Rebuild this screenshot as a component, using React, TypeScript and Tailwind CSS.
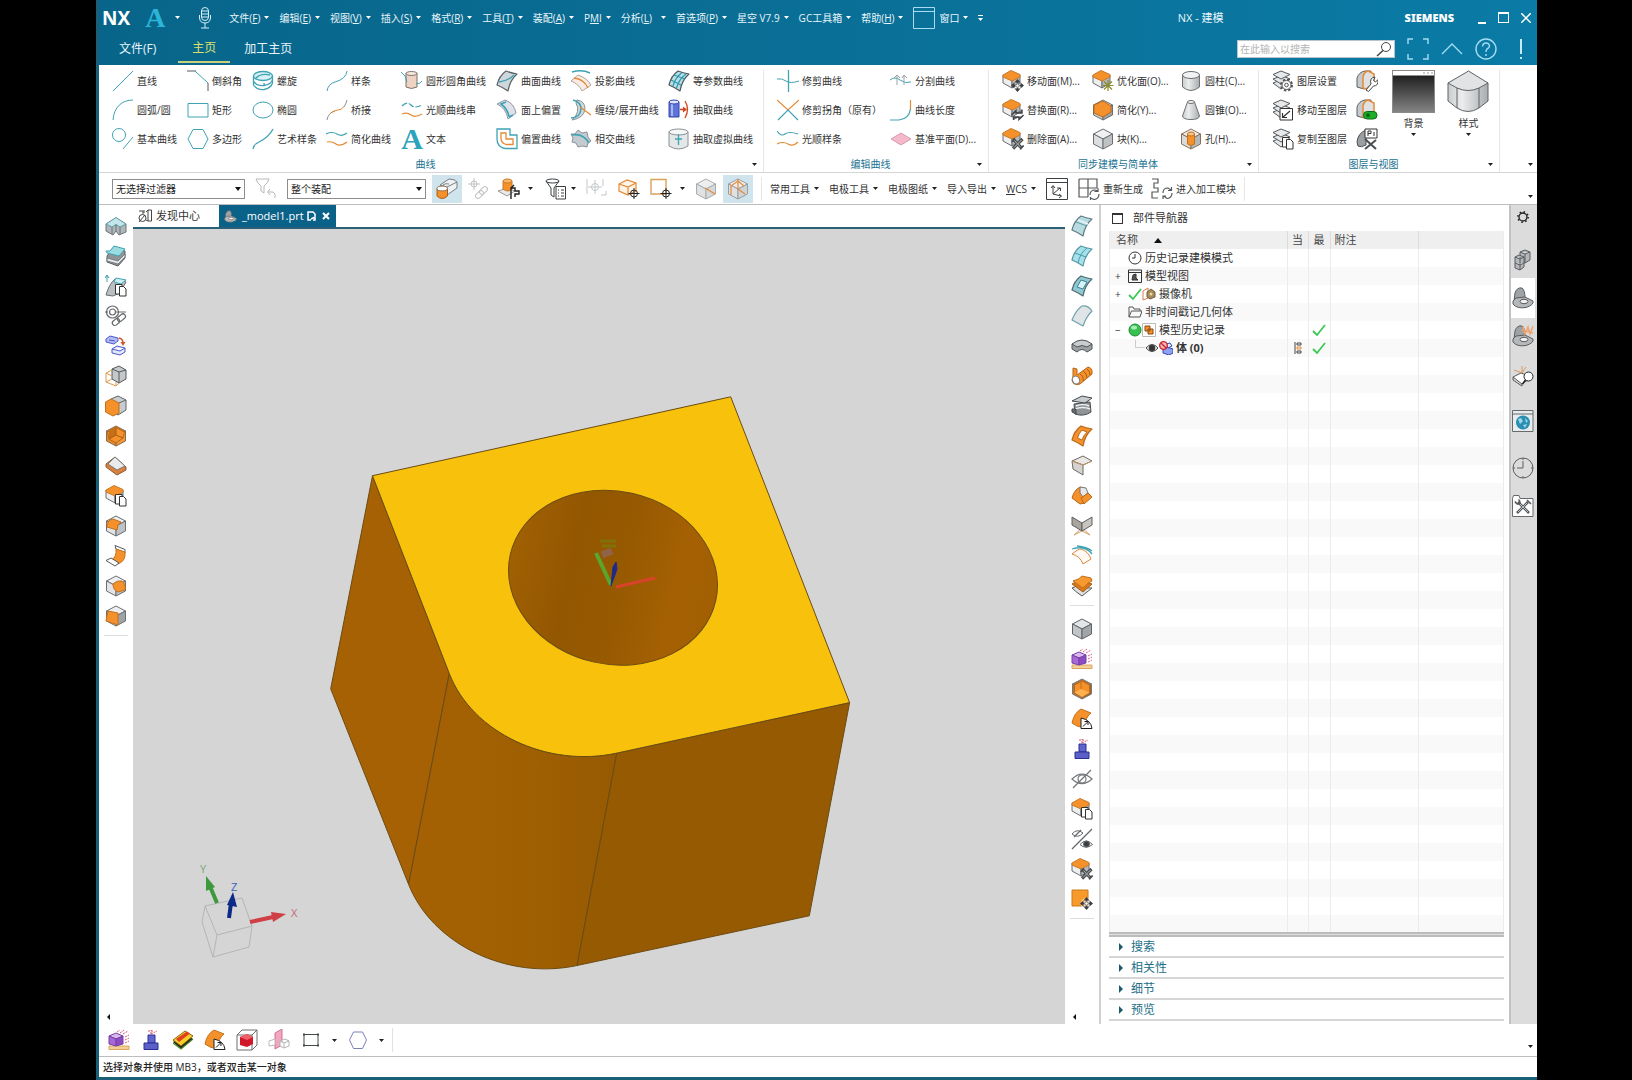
import type { ReactNode } from 'react';

const T = '#3fa3b3';
const O = '#e58a35';
const G = '#555b60';
const F = '#f5912a';

const cube = (top: string, left: string, right: string, stroke = '#6b6f72') => (
  <g stroke={stroke} strokeWidth="1" strokeLinejoin="round">
    <path d="M11 1 20.500 6 11 11 1.500 6Z" fill={top} />
    <path d="M1.500 6 11 11V21L1.500 16Z" fill={left} />
    <path d="M20.500 6 11 11V21L20.500 16Z" fill={right} />
  </g>
);
const smallCube = (
  <g strokeWidth="1" strokeLinejoin="round">
    <path d="M1 5 10 10V18L1 13Z" fill="#eceeef" stroke="#6b6f72" />
    <path d="M18 5 10 10V18L18 13Z" fill="#b4b8bb" stroke="#6b6f72" />
    <path d="M9 .500 18 4.500V7L10 11 1 7V5Z" fill={F} stroke="#c87a28" />
  </g>
);
const moveBadge = (
  <g stroke="#3c4043" strokeWidth="1.500" fill="#3c4043">
    <path d="M15.500 10V21M10 15.500H21" />
    <path d="M15.500 9 12.500 12.500H18.500ZM15.500 22 12.500 18.500H18.500ZM9 15.500 12.500 12.500V18.500ZM22 15.500 18.500 12.500V18.500Z" stroke="none" />
    <path d="M13.500 15.500H17.500M15.500 13.500V17.500" stroke="#fff" strokeWidth=".800" />
  </g>
);
const crossBadge = (
  <g fill="none">
    <path d="M11 11 20 20.500M20.500 11 11 20.500" stroke="#4a4d50" strokeWidth="3.200" />
    <path d="M12 12 19 19.500M19.500 12 12 19.500" stroke="#b9bcbe" strokeWidth="1" />
    <path d="M9.500 13.500Q12.500 13.500 12.500 10M18.500 21.500Q18.500 18 22 18" stroke="#4a4d50" strokeWidth="1.500" />
  </g>
);
const pagesBadge = (
  <g fill="#fff" stroke="#333" strokeWidth="1">
    <path d="M10.500 9.500H17V19H10.500Z" />
    <path d="M14.500 11.500H18.500L21 14V21H14.500Z" />
  </g>
);
const targetBadge = (
  <g fill="none" stroke="#222">
    <circle cx="16" cy="15.500" r="3.500" />
    <path d="M16 10V21M10.500 15.500H21.500" />
  </g>
);
const gearBadge = (
  <g>
    <circle cx="14.500" cy="15" r="5.500" fill="#fff" stroke="#555" strokeWidth="2" strokeDasharray="2.500 1.800" />
    <circle cx="14.500" cy="15" r="4.500" fill="#fff" stroke="#555" />
    <circle cx="14.500" cy="15" r="1.800" fill="none" stroke="#555" />
  </g>
);
const layers = (
  <g fill="#e6e8e9" stroke="#55595c" strokeWidth="1" strokeLinejoin="round">
    <path d="M1 13 10 9.500 18 13 9 19Z" />
    <path d="M1 9 10 5.500 18 9 9 14Z" />
    <path d="M1 4.500 9 1 18 4.500 9 9Z" />
  </g>
);
const sheet = (fill: string, stroke: string) => (
  <path d="M10 1Q15 3 21 4 14 10 12 21 6 17 1 15 3 6 10 1Z" fill={fill} stroke={stroke} strokeWidth="1.200" strokeLinejoin="round" />
);
const part = (
  <g stroke="#5a5d60" strokeWidth="1">
    <path d="M2 14 3 6Q5 0 10 1 13 3 13 11L8 17Z" fill="#9fa3a6" />
    <path d="M1 14 4 11 13 10 21 14Q22 18 14 20.500 5 22 1 17Z" fill="#b5b8ba" />
    <ellipse cx="12" cy="14.500" rx="4" ry="2.200" fill="#f2f2f2" />
  </g>
);
const purpleBlock = (
  <g>
    <path d="M1 17H21V20.500H1Z" fill="#f3cf9a" stroke="#d9a85c" />
    <path d="M1 7 8 4 15 7 8 10Z" fill="#d9b8ee" stroke="#7a3fa8" />
    <path d="M1 7 8 10V17L1 15Z" fill="#a569d6" stroke="#7a3fa8" />
    <path d="M15 7 8 10V17L15 15Z" fill="#8a4cc0" stroke="#7a3fa8" />
    <path d="M9 3 12 1M12 4 16 1M15 5 20 2M17 8 21 6M17 11 21 9M17 14 21 12" stroke="#d85a7a" strokeWidth="1" strokeDasharray="2 1" />
  </g>
);
const pedestal = (
  <g stroke="#2d2f8e">
    <path d="M8 6H15V14H8Z" fill="#6064d0" />
    <path d="M4 14H18V20.500H4Z" fill="#5b5fc8" />
    <path d="M11 5V1M8 2H14M11 5 17 2" stroke="#d8506a" strokeDasharray="2 1" />
  </g>
);
const orangeFan = (
  <g>
    <path d="M1 15Q3 5 10 1L20 5Q15 8 13 20L6 18Z" fill={F} stroke="#c2701c" />
    <path d="M10 10V20.500H21Q20 12 10 10Z" fill="#fff" stroke="#222" />
    <path d="M12 18.500 17 13.500M13.500 13.500H17V17" fill="none" stroke="#222" />
  </g>
);

const icons: Record<string, ReactNode> = {
  line: <path d="M1 21 21 1" stroke={T} />,
  chamfer: (
    <g fill="none">
      <path d="M0 1H9M21 13V21" stroke={G} />
      <path d="M8 1 21 13" stroke={T} />
    </g>
  ),
  helix: (
    <g fill="none" stroke={T} strokeWidth="1.300">
      <ellipse cx="11" cy="6" rx="9.500" ry="4.500" fill="#d6f0f4" />
      <path d="M1.500 6V11Q4 16 12 15.500 20 14 20.500 9V6M1.500 11V15Q5 20 12 19.500 19 18 20.500 13V9M4 8Q9 3 18 5M12 15.500V13" />
    </g>
  ),
  spline: <path d="M1 21Q2 14 9 12 20 9 21 1" stroke={T} fill="none" />,
  fillet: (
    <g>
      <path d="M5 3V17Q10.500 20 16 17V3Z" fill="#eed3c4" stroke="#7c7068" />
      <ellipse cx="10.500" cy="3.500" rx="5.500" ry="2" fill="#f6e7de" stroke="#7c7068" />
      <path d="M0 2Q5 5 6 12M15 14Q19 14 21 11" fill="none" stroke={T} />
    </g>
  ),
  surfcurve: (
    <g>
      {sheet('#cdd7dc', '#5a5f64')}
      <path d="M3 12Q12 11 18 5" fill="none" stroke={T} strokeWidth="1.400" />
    </g>
  ),
  arc: <path d="M1 21C2 8 10 1 21 1" stroke={T} fill="none" />,
  rect: <path d="M1 4.500H21V18H1Z" stroke={T} fill="none" />,
  ellipse: <ellipse cx="11" cy="11" rx="10" ry="8" stroke={T} fill="none" />,
  bridge: (
    <g fill="none">
      <path d="M1 21Q2 14 9 12" stroke="#8a8f92" />
      <path d="M4 14.500Q7 12 10 11.500 16 11 18 7.500" stroke={O} />
      <path d="M18 8Q20 5 21 1" stroke="#8a8f92" />
    </g>
  ),
  smoothstring: (
    <g fill="none" strokeWidth="1.200">
      <path d="M1 7Q6 2 10 6T21 6" stroke={T} strokeDasharray="6 1.500" />
      <path d="M1 15Q6 13 10 16T21 15" stroke={O} />
    </g>
  ),
  faceoffset: (
    <g>
      <path d="M1 5 9 1Q18 4 20 14L12 20Q10 9 1 5Z" fill="#dde1ea" stroke="#8d94a0" />
      <path d="M13 18Q12 10 5 5L10 3M13 18 17 16" fill="none" stroke={T} strokeWidth="1.600" />
    </g>
  ),
  basic: (
    <g fill="none" stroke={T}>
      <circle cx="7" cy="7" r="6.500" />
      <path d="M11 21 21 9" />
    </g>
  ),
  hex: <path d="M6 1.500H16L21 11 16 20.500H6L1 11Z" stroke={T} fill="none" />,
  artspline: <path d="M1 21Q2 16 7 14 17 9 21 1" stroke={T} fill="none" strokeWidth="1.300" />,
  simplify: (
    <g fill="none" strokeWidth="1.200">
      <path d="M0 6Q6 3 11 6T21 5" stroke={T} />
      <path d="M1 14Q6 13 10 16T21 14" stroke={O} />
    </g>
  ),
  offset: (
    <g fill="none">
      <path d="M1 1H14V7H21V20.500H9Q1 19 1 11Z" stroke={T} strokeWidth="1.300" />
      <path d="M5 5H10V11H17V16.500H10Q5 15 5 10Z" stroke={O} strokeWidth="1.300" />
    </g>
  ),
  project: (
    <g>
      <path d="M1 11 8 5Q17 8 21 15L12 21Q9 14 1 11Z" fill="#f8ece4" stroke="#b3a49b" />
      <path d="M4 8Q14 9 18 18" fill="none" stroke={O} strokeWidth="1.300" />
      <path d="M2 2Q12 -1 20 3" fill="none" stroke={T} strokeWidth="1.400" />
    </g>
  ),
  wrap: (
    <g>
      <path d="M7 1Q15 2 15 10 14 19 2 21 11 13 6 4Z" fill="#d3dadd" stroke="#8a9094" />
      <path d="M3 1Q11 3 11 10 10 19 1 19" fill="none" stroke={T} strokeWidth="1.600" />
      <path d="M10 8 21 16" stroke={O} strokeWidth="1.300" />
    </g>
  ),
  intersect: (
    <g>
      <path d="M1 6 5 6 8 2 12 5 17 4 18 9 21 13 18 15 17 19 12 18 8 19 6 15 2 14 3 10Z" fill="#c3cbd0" stroke="#8b9398" />
      <path d="M2 7Q13 5 19 15" fill="none" stroke={T} strokeWidth="1.600" />
    </g>
  ),
  iso: (
    <g>
      {sheet('#b9dfe6', '#50565a')}
      <path d="M3 10 13 15M6 5 17 9M5 16Q7 8 14 2.500M8.500 18Q11 9 18 4" fill="none" stroke="#2d98ab" strokeWidth="1.200" />
    </g>
  ),
  extract: (
    <g>
      <path d="M1 3V18H11V3Z" fill="#5c73d8" stroke="#3547b0" />
      <path d="M3 4H5V17H3Z" fill="#a9b5f2" />
      <ellipse cx="6" cy="3" rx="5" ry="2" fill="#dfe4fb" stroke="#3547b0" />
      <path d="M17 2Q22 10 17 19M12 10.500H16" fill="none" stroke="#d0451b" strokeWidth="1.300" />
      <path d="M15 7.500 19 10.500 15 13.500Z" fill="#d0451b" />
    </g>
  ),
  virtual: (
    <g stroke="#8b9194">
      <path d="M1 4V18Q10.500 24 20 18V4Z" fill="#e4e7e8" />
      <ellipse cx="10.500" cy="4" rx="9.500" ry="3" fill="#f5f6f6" />
      <path d="M10.500 6V17M7 11H14" stroke={T} strokeWidth="1.300" />
    </g>
  ),
  trim: (
    <g fill="none" stroke={T}>
      <path d="M11.500 0V22" strokeWidth="1.300" />
      <path d="M0 9Q5 8 9 11T22 11" />
    </g>
  ),
  corner: (
    <g strokeWidth="1.200">
      <path d="M0 1 11 11 22 1" stroke={O} fill="none" />
      <path d="M1 21 11 11 21 21" stroke={T} fill="none" />
    </g>
  ),
  smoothspline: (
    <g fill="none" strokeWidth="1.200">
      <path d="M0 3Q4 9 8 6T21 6" stroke={T} />
      <path d="M0 16Q6 13 11 16T21 14" stroke={O} />
    </g>
  ),
  divide: (
    <g fill="none">
      <path d="M0 10Q5 6 10 10T21 12" stroke={T} />
      <path d="M7 6V15M14 6V15M4 8 7 5 10 8M12 8 14 5 17 8" stroke="#9aa3a8" />
    </g>
  ),
  length: (
    <g fill="none" strokeWidth="1.200">
      <path d="M20.500 1V11" stroke={O} />
      <path d="M20.500 10Q19 20 9 21H0" stroke={T} />
    </g>
  ),
  datum: <path d="M1 11 11 5 21 11 11 17Z" fill="#f5b9cc" stroke="#d99aae" />,

  moveface: <g>{smallCube}{moveBadge}</g>,
  replaceface: (
    <g>
      {smallCube}
      <path d="M9.500 16 14 11.500V14H20V10.500M21.500 16 17 20.500V18H11.500V21" fill="#777" stroke="#3c4043" strokeWidth="1.400" />
    </g>
  ),
  deleteface: <g>{smallCube}{crossBadge}</g>,
  optimize: (
    <g>
      {smallCube}
      <path d="M16 10V21M10.500 15.500H21.500M12 11.500 20 19.500M20 11.500 12 19.500" stroke="#8a8b2c" strokeWidth="1.200" />
    </g>
  ),
  simple: (
    <g>
      {cube('#dcdfe1', '#c9cccf', '#9ea2a5')}
      <path d="M2 6 11 2 19 7V13L11 18 2 14Z" fill={F} stroke="#b9681a" />
    </g>
  ),
  block: cube('#f0f1f2', '#dcdee0', '#bfc2c4'),
  cylinder: (
    <g stroke="#6c7073">
      <path d="M2.500 5V17Q11 24 19.500 17V5Z" fill="url(#metal)" />
      <ellipse cx="11" cy="5" rx="8.500" ry="3.500" fill="#f1f2f2" />
    </g>
  ),
  cone: (
    <g stroke="#6c7073">
      <path d="M7.500 3 2.500 17Q3 20.500 11 20.500T19.500 17L14.500 3Z" fill="url(#metal)" />
      <ellipse cx="11" cy="3" rx="3.500" ry="1.500" fill="#f1f2f2" />
    </g>
  ),
  hole: (
    <g>
      {cube('#e9ebec', '#d8dadc', '#b4b7b9', '#8a7256')}
      <path d="M7.500 6V16Q11 19 14.500 16V6Z" fill={F} stroke="#c2701c" />
      <ellipse cx="11" cy="6" rx="3.500" ry="2" fill="#fbc48a" stroke="#c2701c" />
    </g>
  ),
  layerset: <g>{layers}{gearBadge}</g>,
  layermove: (
    <g>
      {layers}
      <path d="M8 9.500H20.500V21H8Z" fill="#fff" stroke="#333" />
      <path d="M10.500 18.500 18 12M10.500 14V18.500H15" fill="none" stroke="#333" strokeWidth="1.200" />
    </g>
  ),
  layercopy: <g>{layers}{pagesBadge}</g>,
  viewwrench: (
    <g>
      <path d="M1 17V8Q3 2 9 1H15V15L8 19Z" fill="#c7cacc" stroke="#5b5e61" />
      <path d="M7 18V7Q8 2 12 1L18 4V13L10 19Z" fill="#dfe1e2" stroke={O} strokeWidth="1.500" />
      <path d="M10 20 15 14Q13 8 19 7L17.500 10.500 19.500 12 22 9.500Q22.500 16 17.500 16L12.500 21.500Z" fill="#fff" stroke="#444" />
    </g>
  ),
  viewtoggle: (
    <g>
      <path d="M1 17V8Q3 2 9 1H15V15L8 19Z" fill="#c7cacc" stroke="#5b5e61" />
      <path d="M7 18V7Q8 2 12 1L18 4V13L10 19Z" fill="#dfe1e2" stroke={O} strokeWidth="1.500" />
      <rect x="7.500" y="12.500" width="13.500" height="7.500" rx="3.700" fill="#1fae2c" stroke="#0c6a16" />
      <circle cx="12" cy="16.200" r="2" fill="#0c6a16" />
    </g>
  ),
  viewpmi: (
    <g>
      <path d="M1 14Q2 5 10 2V17Q5 20 2 18Z" fill="#9b9fa2" stroke="#4b4e51" />
      <path d="M9 1H21V10H9Z" fill="#fff" stroke="#333" />
      <path d="M12 8V3H15V5.500H12M18 4V8" fill="none" stroke="#333" />
      <path d="M9 11 20 21M20 12 9 21" stroke="#4a4d50" strokeWidth="2" />
    </g>
  ),

  filterclear: (
    <g fill="none" stroke="#b4b8bb">
      <path d="M1 1H14Q13 5 9 8V15L6 13V8Q2 5 1 1Z" />
      <path d="M13 14H18Q21 15 20 20M15 11 12.500 14 15 17" />
    </g>
  ),
  cylpair: (
    <g>
      <path d="M4 7 13 1Q19 1 21 4V10L11 17V9Z" fill="#eef2f4" stroke="#7a7e81" />
      <path d="M11 9 21 4M7 7Q9 5 13 6" stroke="#7a7e81" fill="none" />
      <path d="M1 10.500V18Q6 23 11.500 18V10.500Z" fill={F} stroke="#a65f14" />
      <ellipse cx="6.200" cy="10.500" rx="5.200" ry="2.400" fill="#fff" stroke="#8a7256" />
    </g>
  ),
  snaplink: (
    <g fill="none" stroke="#bfc3c5">
      <circle cx="6" cy="6" r="3" />
      <path d="M6 0V12M0 6H12" />
      <rect x="7" y="14" width="9" height="5" rx="2.500" transform="rotate(-45 11.500 16.500)" />
      <rect x="11" y="10" width="9" height="5" rx="2.500" transform="rotate(-45 15.500 12.500)" />
    </g>
  ),
  cylhand: (
    <g>
      <path d="M0 13 9 10 17 13 9 18Z" fill="#e8e8e8" stroke="#999" />
      <path d="M5 3V11Q10 15 14 11V3Z" fill={F} stroke="#c87a28" />
      <ellipse cx="9.500" cy="3" rx="4.500" ry="2" fill="#ffb566" stroke="#c87a28" />
      <path d="M13 21V10H17V13H21V16H17V19M13 10 16 7" fill="none" stroke="#222" strokeWidth="1.400" />
    </g>
  ),
  filterlist: (
    <g fill="none" stroke="#3b3f42">
      <ellipse cx="7.500" cy="3" rx="6.500" ry="2" />
      <path d="M1 3 6 10V17L9 19V10L14 3" />
      <path d="M11 8.500H20.500V21H11Z" fill="#fff" />
      <path d="M13 12H14M16 12H19M13 15H14M16 15H19M13 18H14M16 18H19" />
    </g>
  ),
  snapgray: (
    <g fill="none" stroke="#c3c7c9">
      <circle cx="9" cy="9" r="3.500" />
      <path d="M9 2V16M2 9H16M1 1V16M17 1V8M15 17H20V13" />
    </g>
  ),
  cubetarget: (
    <g>
      <path d="M1 6 9 2 18 5V13L10 17 1 13Z" fill="#fdf3e6" stroke={O} strokeWidth="1.200" />
      <path d="M1 6 10 9 18 5M10 9V17" fill="none" stroke={O} strokeWidth="1.200" />
      {targetBadge}
    </g>
  ),
  recttarget: (
    <g>
      <path d="M1 1.500H16V16H1Z" fill="none" stroke="#dba05a" strokeWidth="1.400" />
      {targetBadge}
    </g>
  ),
  cubeline: (
    <g>
      {cube('#eceeef', '#dfe1e2', '#d6d8da', '#a9acae')}
      <path d="M10 10 20 16" stroke={O} strokeWidth="1.200" />
    </g>
  ),
  cubeedge: (
    <g>
      {cube('#eceeef', '#dfe1e2', '#d0d3d5', '#999da0')}
      <path d="M4 17V8L11 3 17 8M11 1V11L18 16" fill="none" stroke={O} strokeWidth="1.200" />
    </g>
  ),
  wcs: (
    <g fill="none" stroke="#3b3f42">
      <path d="M.500.500H21.500V21.500H.500ZM.500 4.500H21.500" />
      <path d="M7 8V16L15 18M7 16 14 10M5 10 7 7.500 9 10M13 16 15.500 18 13 20M11 10H14.500V13" />
    </g>
  ),
  regen: (
    <g fill="none" stroke="#55595c" strokeWidth="1.200">
      <path d="M1 1H19V10M1 1V19H10M10 1V19M1 10H19" />
      <path d="M12 17Q12 12 17 12L20 13M21 16Q21 21 16 21.500L12.500 20M20 10V13.500H16.500M12.500 22V19" />
    </g>
  ),
  machining: (
    <g fill="none" stroke="#55595c" strokeWidth="1.200">
      <path d="M1 1H7V5H3V10H7V14H1V20H7" />
      <path d="M12 15Q12 10 17 10L20 12M21 15Q21 20 16 20.500L12.500 18M20.500 9V12.500H17M12 21V18H15" />
    </g>
  ),

  lbracket: (
    <g stroke="#6b7478">
      <path d="M1 9 11 3 21 9V17L14 20 11 16 8 20 1 16Z" fill="#aeb6b9" />
      <path d="M1 9 11 2.500 21 9 15 12 11 9.500 7 12Z" fill="#c3e6ea" stroke="#5f9ca6" />
      <path d="M7 12V19M15 12V19M11 9.500V16" fill="none" />
    </g>
  ),
  section: (
    <g>
      <path d="M2 11 8 3 20 6V13L13 21 2 17Z" fill="#8f9497" stroke="#5a5e61" />
      <path d="M2 13 13 16 20 9V12L13 19 2 16Z" fill="#e4e7e8" stroke="#6a6e71" strokeWidth=".800" />
      <path d="M1 6H5L9 1 20 4 14 11 2 8Z" fill="#9bdce3" stroke={T} />
    </g>
  ),
  sketchpages: (
    <g>
      <path d="M1 20Q4 9 10 4L21 7 15 18 8 21Z" fill="#b9bec0" stroke="#6c7073" />
      <path d="M11 3 21 5 16 9 9 7ZM2 1V7M0 3 2 0 4 3" fill="#cfeef2" stroke={T} />
      {pagesBadge}
    </g>
  ),
  linkpart: (
    <g fill="none" stroke="#65696c" strokeWidth="1.200">
      <circle cx="7.500" cy="7" r="6" />
      <circle cx="7.500" cy="7" r="3" />
      <path d="M0 7H3M11 7H21" />
      <rect x="7" y="14.500" width="8" height="5" rx="2.500" fill="#fff" transform="rotate(-40 11 17)" />
      <rect x="12" y="10.500" width="9" height="5" rx="2.500" transform="rotate(-40 16 13)" />
    </g>
  ),
  bluemove: (
    <g stroke="#4a57c8">
      <path d="M1 4 5 1 13 3V6L9 9 1 7ZM4 5 10 6" fill="#b3bcf5" />
      <path d="M7 14 12 11 20 13V17L15 20 7 18ZM7 14 15 16 20 13" fill="#e5e8fd" />
      <path d="M14 3Q18 4 18 8" fill="none" stroke="#d0552a" strokeWidth="1.500" />
      <path d="M15.500 7H20.500L18 11Z" fill="#d0552a" stroke="none" />
    </g>
  ),
  wirecube: (
    <g>
      <path d="M7 4 14 1 21 5V14L14 18 7 14Z" fill="#c5c8ca" stroke="#55595c" />
      <path d="M7 4 14 7 21 5M14 7V18" fill="none" stroke="#55595c" />
      <path d="M1 8 7 5M1 8V17L11 21 14 18M1 8 7 11M1 17 7 14M11 21V17" fill="none" stroke="#d99a4e" />
    </g>
  ),
  extrude: (
    <g>
      <path d="M6 4 13 1 21 5V15L13 20 6 15Z" fill="#c9cccf" stroke="#5f6366" />
      <path d="M0.500 7 6 4 14 8V18L8 21 .500 17Z" fill={F} stroke="#c2701c" />
      <path d="M14 8 21 5" fill="none" stroke="#5f6366" />
    </g>
  ),
  shell: (
    <g>
      {cube('#d57f22', '#e08a2c', '#f0973a', '#8b6d4c')}
      <path d="M2.500 7 11 2.500 19.500 7 18 13 11 18 4 14Z" fill={F} stroke="#b9681a" />
      <path d="M4 6.500 11 3V10L4 14Z" fill="#c56f16" />
      <path d="M11 10 18 13M11 3V10L4 14" fill="none" stroke="#a85c10" />
    </g>
  ),
  tilt: (
    <g strokeLinejoin="round">
      <path d="M1 9 10 2 21 12V15L12 20 1 12Z" fill="#d9803c" stroke="#8b5a36" />
      <path d="M3 9 10 2 20 11 12 15Z" fill="#e9ebed" stroke="#777b7e" />
    </g>
  ),
  cubepages: <g>{smallCube}{pagesBadge}</g>,
  draft: (
    <g>
      {cube('#eceeef', '#e2e4e6', '#bfc2c5')}
      <path d="M2 9Q4 4 8 4L16 7Q12 9 12 15L2 12Z" fill={F} stroke="#c2701c" />
    </g>
  ),
  bend: (
    <g>
      <path d="M10 .500 20 4.500 20 8 11 4Z" fill="#fff" stroke="#55595c" />
      <path d="M11 4 20 7Q21 16 13 19L6 15Q12 12 11 4Z" fill={F} stroke="#c2701c" />
      <path d="M1 15.500 6 13 14 18 10 21Z" fill="#fff" stroke="#55595c" />
    </g>
  ),
  round: (
    <g>
      {cube('#eceeef', '#e2e4e6', '#bfc2c5')}
      <path d="M8 9Q12 5 17 6 21 9 20 15L13 17Q8 15 8 9Z" fill={F} stroke="#c2701c" />
    </g>
  ),
  faceblend: (
    <g>
      {cube('#eceeef', '#d7dadc', '#9fa3a6')}
      <path d="M3 6 13 8V20L1 16Z" fill={F} stroke="#c2701c" />
    </g>
  ),

  sheet1: (
    <g>
      {sheet('#b6dce2', '#5f7a80')}
      <path d="M5 7 16 11" fill="none" stroke="#5f9ca6" />
      <path d="M7 5 17 9" fill="none" stroke="#e8f5f7" strokeWidth="1.500" />
    </g>
  ),
  sheet2: (
    <g>
      {sheet('#a8e0ea', '#5496a2')}
      <path d="M4 8 15 12M7 18Q9 8 16 3" fill="none" stroke="#3f9db0" />
    </g>
  ),
  sheet3: (
    <g>
      {sheet('#8fc9d3', '#50696f')}
      <path d="M6 12 10 5 16 7 12 14Z" fill="#d7f3f7" stroke="#3b8391" />
    </g>
  ),
  sheet4: <path d="M1 15Q5 5 11 1 17 0 21 6 15 12 12 21Z" fill="#e1e4e6" stroke="#6fa2aa" strokeWidth="1.200" strokeLinejoin="round" />,
  saddle: (
    <g stroke="#4f5356" strokeLinejoin="round">
      <path d="M1 9V14L6 17Q11 12 16 17L21 14V9Z" fill="#9da1a4" />
      <path d="M1 9Q11 1 21 9L16 12Q11 9 6 12Z" fill="#c9cccd" />
    </g>
  ),
  tube: (
    <g stroke="#b5651a">
      <path d="M2 3 6 4V10L17 2Q22 3 21 9L9 19Q2 21 1 15L2 11Z" fill={F} />
      <ellipse cx="5" cy="15" rx="3.500" ry="4" fill="#fff" stroke="#777" transform="rotate(-25 5 15)" />
      <path d="M9 9Q13 11 12 16M12 6Q16 8 16 13M16 4Q19 6 19 10" fill="none" stroke="#a65f14" />
    </g>
  ),
  ribbonbody: (
    <g stroke="#45494c" strokeLinejoin="round">
      <path d="M3 9 19 7 20 17Q13 22 4 19Z" fill="#8f9396" />
      <path d="M5 11Q12 8 18 11M4 14Q12 11 19 14" fill="none" stroke="#eceeef" strokeWidth="1.600" />
      <path d="M1 6 11 1 21 3 14 8Z" fill="#c9cccf" />
      <path d="M1 14H5V19L1 17Z" fill="#6a6e71" />
    </g>
  ),
  orangeframe: (
    <g>
      {sheet(F, '#b9681a')}
      <path d="M6.500 13Q8 8 11 5L16 7Q12 11 11 15Z" fill="#fff" stroke="#b9681a" />
    </g>
  ),
  cornersheet: (
    <g stroke="#6f6a62" strokeLinejoin="round">
      <path d="M1 6 12 1 21 6 12 10Z" fill="#e9e8e5" />
      <path d="M1 6 12 10V20L2 14Z" fill="#d5d3d0" />
      <path d="M1 6 12 10 21 6" fill="none" stroke="#c79a6a" />
    </g>
  ),
  boxsheet: (
    <g strokeLinejoin="round">
      <path d="M1 13Q3 5 9 2L15 5Q10 9 13 18L9 19Z" fill={F} stroke="#b9681a" />
      <path d="M9 2 15 3 17 8 12 12 9 8Z" fill="#e5e9ec" stroke="#777" />
      <path d="M10 13 17 8 21 12 13 19Z" fill={F} stroke="#b9681a" />
    </g>
  ),
  vshape: (
    <g stroke="#5b5e61" strokeLinejoin="round">
      <path d="M3 20 11 13 19 20 11 16Z" fill="none" stroke="#d9a066" />
      <path d="M1 2 11 8V16L1 10Z" fill="#a9a49d" />
      <path d="M21 2 11 8V16L21 10Z" fill="#c9c4bd" />
    </g>
  ),
  orangecurve: (
    <g fill="none">
      <path d="M1 9Q7 4 10 4 17 6 20 14L12 19Q9 11 1 9Z" fill="#fffaf4" stroke="#d9863a" />
      <path d="M1 4Q14 0 21 9M6 1Q16 2 21 6" stroke={T} strokeWidth="1.300" />
    </g>
  ),
  stack: (
    <g strokeLinejoin="round">
      <path d="M1 13 8 10Q14 14 21 13L11 21Q5 17 1 13Z" fill="#dfe1e2" stroke="#55595c" />
      <path d="M1 9 8 5 21 9 12 17Z" fill="#d87a1c" stroke="#a65f14" />
      <path d="M2 6Q9 4 11 1L20 3 21 6Q16 8 12 13Z" fill="#f7992f" stroke="#c2701c" />
    </g>
  ),
  graycube: cube('#e3e5e6', '#c2c5c7', '#a1a5a8', '#5f6366'),
  purple: purpleBlock,
  hexshell: (
    <g>
      {cube('#b77436', '#b77436', '#a9662a', '#777')}
      <path d="M3.500 7 11 3 18.500 7V14.500L11 19 3.500 14.500Z" fill={F} stroke="#b9681a" />
      <path d="M3.500 14.500 10 11 18.500 14.500L11 19Z" fill="#ffb04f" />
      <path d="M10 4V11" fill="none" stroke="#c46f18" />
    </g>
  ),
  fan: orangeFan,
  pedestal,
  eyeoff: (
    <g fill="none" stroke="#74787b" strokeWidth="1.200">
      <path d="M1 11Q11 1 21 11 11 20 1 11Z" />
      <circle cx="11" cy="11" r="4" />
      <path d="M2 20 20 2" />
    </g>
  ),
  eyeswap: (
    <g fill="none" stroke="#65696c">
      <path d="M1 6Q6 0 12 5 7 11 1 6ZM9 16.500Q15 9.500 21.500 16.500 15 22 9 16.500Z" />
      <path d="M1 21 21 1M3 9 10 2" strokeWidth="1.300" />
      <circle cx="15.500" cy="16" r="3" fill="#3b3f42" />
    </g>
  ),
  orangemove: (
    <g>
      <path d="M1 2H17V18H1Z" fill="#f79a2b" stroke="#c77a20" />
      <circle cx="15.500" cy="15.500" r="5.500" fill="#fff" fillOpacity=".6" />
      {moveBadge}
    </g>
  ),

  stripes: (
    <g>
      <path d="M1 13 13 5 21 10 9 20Z" fill="#222" />
      <path d="M1 11 13 2 21 7 9 17Z" fill="#f6cf28" stroke="#8a6a10" />
      <path d="M4 10 15 2.500 18 4.500 7 13Z" fill="#e2401c" />
      <path d="M1 14 9 20 21 10" fill="none" stroke="#4d8a2a" strokeWidth="1.200" />
    </g>
  ),
  redcube: (
    <g>
      <path d="M1 6 6 1H21V16L16 21H1ZM1 6H16V21M16 6 21 1" fill="#fff" stroke="#6a6e71" />
      <path d="M4 8 11 5 17 8V15L11 18 4 16Z" fill="#d01828" />
      <path d="M4 8 11 5 17 8 11 11Z" fill="#f0606a" />
    </g>
  ),
  pinkplane: (
    <g>
      <path d="M7 4 14 0V16L7 20Z" fill="#f3a6bd" stroke="#cf7390" />
      <path d="M1 12 7 10V16L1 17Z" fill="#fff" stroke="#bbb" />
      <path d="M12 12 17 10 21 12V17L16 19 12 17ZM12 12 16 14 21 12M16 14V19" fill="#fff" stroke="#b0b4b6" />
    </g>
  ),
  rectsel: (
    <g fill="none" stroke="#45494c">
      <path d="M4 5.500H18V16.500H4Z" />
      <path d="M3 4.500H5V6.500H3ZM17 4.500H19V6.500H17ZM3 15.500H5V17.500H3ZM17 15.500H19V17.500H17Z" fill="#45494c" stroke="none" />
    </g>
  ),
  hexsel: <path d="M6.500 3H15.500L19.500 11 15.500 19.500H6.500L2.500 11Z" fill="none" stroke="#7a82b8" />,

  part,
  gear: (
    <g fill="none" stroke="#222">
      <circle cx="11" cy="11" r="4" strokeWidth="1.300" />
      <circle cx="11" cy="11" r="5.200" strokeWidth="1.500" strokeDasharray="1.500 2.580" />
    </g>
  ),
  assembly: (
    <g fill="#b5b8ba" stroke="#5a5d60" strokeLinejoin="round">
      <path d="M8 3 13 1 18 3V11L13 14 8 12ZM8 3 13 5 18 3M13 5V14" />
      <path d="M3 8 7 6 12 8V18L8 21 3 19ZM3 8 8 10 12 8M8 10V21M3 14 8 16 12 14" />
    </g>
  ),
  partorange: (
    <g>
      {part}
      <path d="M11 1 13 9 16 2 18 9 21 1M10 5 21 8" fill="none" stroke="#eda36a" strokeWidth="1.400" />
    </g>
  ),
  partsearch: (
    <g>
      <path d="M1 12 9 8 20 12 10 19Z" fill="#fff" stroke="#55595c" />
      <path d="M1 12V15L10 21V19" fill="none" stroke="#55595c" />
      <path d="M10 1V8M2 5 10 8 14 2" fill="none" stroke="#d99a5e" />
      <circle cx="16.500" cy="11.500" r="4.500" fill="#fff" stroke="#222" />
      <path d="M13.500 15 10.500 19" stroke="#222" strokeWidth="1.500" />
    </g>
  ),
  web: (
    <g>
      <path d="M.500.500H21V21.500H.500Z" fill="#e8eced" stroke="#666a6d" />
      <path d="M.500 4H21" stroke="#666a6d" />
      <circle cx="11" cy="12.500" r="7" fill="#2a8fb3" />
      <path d="M6 9 9 8 11 11 8 14ZM13 8 16 11 14 13ZM11 15 15 14 13 18Z" fill="#9fd6e8" />
    </g>
  ),
  clock: (
    <g fill="none" stroke="#5b5f62">
      <circle cx="11" cy="11" r="10" />
      <path d="M11 4V11H5M11 1V3M11 19V21M1 11H3M19 11H21" />
    </g>
  ),
  tools: (
    <g>
      <path d="M.500 3.500V21.500H21V3.500H8L7 .500H1.500Z" fill="#fff" stroke="#666a6d" />
      <path d="M6 7 17 18M16 7 5 18" stroke="#55595c" strokeWidth="2.600" />
      <path d="M7 8 16 17M15 8 6 17" stroke="#d5d7d9" strokeWidth=".800" />
      <path d="M3 6.500Q5 10 7 8.500 9 7 6.500 4.500M15 5 19 9" fill="none" stroke="#55595c" strokeWidth="1.600" />
    </g>
  ),
};

function Icon({ name, className = 'size-[22px]' }: { name: string; className?: string }) {
  return (
    <svg viewBox="0 0 22 22" className={`${className} shrink-0`} aria-hidden="true">
      {icons[name]}
    </svg>
  );
}

function Caret({ className = 'text-[#222]' }: { className?: string }) {
  return (
    <svg viewBox="0 0 5 3" className={`h-[3px] w-[5px] shrink-0 ${className}`} aria-hidden="true">
      <path d="M0 0H5L2.500 3Z" fill="currentColor" />
    </svg>
  );
}

const menus: [string, string, string][] = [
  ['文件(', 'F', ')'],
  ['编辑(', 'E', ')'],
  ['视图(', 'V', ')'],
  ['插入(', 'S', ')'],
  ['格式(', 'R', ')'],
  ['工具(', 'T', ')'],
  ['装配(', 'A', ')'],
  ['P', 'M', 'I'],
  ['分析(', 'L', ')\u00a0\u00a0'],
  ['首选项(', 'P', ')'],
  ['星空 V7.9', '', ''],
  ['GC工具箱', '', ''],
  ['帮助(', 'H', ')'],
];

function Header() {
  return (
    <header className="shrink-0 bg-linear-to-r from-[#08658a] via-[#0a6f96] to-[#0a7ba6] pb-0.5 text-[#e8f6fb]">
      <div className="flex h-[35px] items-center pl-[3px]">
        <span className="text-[19px] leading-5 font-bold text-white">NX</span>
        <span className="ml-[15px] font-['Liberation_Serif',serif] text-[28px] leading-7 font-bold text-[#2bb5d8]">A</span>
        <button type="button" aria-label="应用" className="ml-2.5"><Caret className="text-white" /></button>
        <svg viewBox="0 0 14 22" className="ml-[18px] h-[22px] w-3.5" fill="none" stroke="#d5eef7" aria-hidden="true">
          <rect x="3.500" y=".500" width="7" height="13" rx="3.500" />
          <path d="M4 4H10M4 7H10M4 10H10M1.500 8V11Q2 16 7 16 12 16 12.500 11V8M7 16V21M3 21H11" />
        </svg>
        <nav className="ml-[17px] flex items-center gap-2.5">
          {menus.map(([a, b, c]) => (
            <button type="button" key={a + b} className="flex items-center gap-1 whitespace-nowrap">
              <span>{a}{b && <u>{b}</u>}{c}</span>
              <Caret className="text-white" />
            </button>
          ))}
          <button type="button" className="flex items-center gap-1 whitespace-nowrap">
            <svg viewBox="0 0 22 22" className="size-[22px]" fill="none" stroke="#a9dcf0" aria-hidden="true">
              <path d="M.500.500H21.500V21.500H.500ZM.500 4.500H21.500" />
            </svg>
            窗口
            <Caret className="text-white" />
          </button>
          <button type="button" aria-label="更多" className="flex flex-col items-center gap-0.5">
            <span className="h-px w-[5px] bg-white" />
            <Caret className="text-white" />
          </button>
        </nav>
        <span className="flex-1" />
        <h1 className="mr-[181px] text-[11px] whitespace-nowrap">NX - 建模</h1>
        <span className="mr-6 font-['Noto_Sans',sans-serif] text-[11px] font-black text-white">SIEMENS</span>
        <button type="button" aria-label="最小化" className="mr-3 flex h-3 w-2 items-end"><span className="h-0.5 w-2 bg-white" /></button>
        <button type="button" aria-label="最大化" className="mr-3 size-[11px] border border-t-2 border-white" />
        <button type="button" aria-label="关闭" className="mr-1.5">
          <svg viewBox="0 0 10 10" className="size-2.5" stroke="#fff" strokeWidth="1.500" aria-hidden="true"><path d="M0 0 10 10M10 0 0 10" /></svg>
        </button>
      </div>
      <div className="flex h-7 items-center text-[12px]">
        <button type="button" className="mr-2 h-full pr-3.5 pl-5 whitespace-nowrap">文件(F)</button>
        <button type="button" className="h-full border-b-2 border-[#c9cf7a] px-3.5 whitespace-nowrap text-[#dde06c]">主页</button>
        <button type="button" className="h-full px-3.5 whitespace-nowrap">加工主页</button>
        <span className="flex-1" />
        <label className="mr-3 flex h-[18px] w-[158px] items-center border border-[#b8c6cc] bg-white">
          <input type="text" aria-label="搜索" placeholder="在此输入以搜索" className="min-w-0 flex-1 px-0.5 text-[10px] text-gray-700 outline-none placeholder:text-[#b3b3b3]" />
          <svg viewBox="0 0 16 16" className="mr-0.5 size-4" fill="none" stroke="#444" aria-hidden="true">
            <circle cx="10" cy="6" r="4.500" />
            <path d="M7 9.500 1 15" strokeWidth="1.500" />
          </svg>
        </label>
        <svg viewBox="0 0 22 22" className="mr-3 size-[22px]" fill="none" stroke="#a5dcf2" strokeWidth="1.400" aria-hidden="true">
          <path d="M1 6V1H6M16 1H21V6M21 16V21H16M6 21H1V16" />
        </svg>
        <svg viewBox="0 0 22 12" className="mr-3 h-3 w-[22px]" fill="none" stroke="#a5dcf2" strokeWidth="1.400" aria-hidden="true">
          <path d="M1 11 11 1 21 11" />
        </svg>
        <svg viewBox="0 0 22 22" className="mr-[22px] size-[22px]" fill="none" stroke="#a5dcf2" strokeWidth="1.400" aria-hidden="true">
          <circle cx="11" cy="11" r="10" />
          <path d="M7.500 8.500Q8 5 11 5T14.500 8Q14.500 10 12 11 11 12 11 14M11 16V18" />
        </svg>
        <svg viewBox="0 0 4 22" className="mr-3.5 h-[22px] w-1" stroke="#c5eaf8" strokeWidth="2" aria-hidden="true">
          <path d="M2 1V16M2 19V21" />
        </svg>
      </div>
    </header>
  );
}

type Tool = [icon: string, label: string];

function ToolColumn({ tools, className }: { tools: Tool[]; className: string }) {
  return (
    <div className={`flex shrink-0 flex-col gap-[7px] ${className}`}>
      {tools.map(([icon, label]) => (
        <button type="button" key={label} aria-label={label} className="flex h-[22px] items-center gap-[3px] whitespace-nowrap">
          {icon === 'A' ? (
            <span className="w-[22px] shrink-0 text-center font-['Liberation_Serif',serif] text-[30px] leading-[22px] font-bold text-[#2ba3bd]">A</span>
          ) : (
            <Icon name={icon} />
          )}
          {label}
        </button>
      ))}
    </div>
  );
}

function Group({ title, className, children }: { title: string; className: string; children: ReactNode }) {
  return (
    <section className={`flex shrink-0 flex-col border-r border-[#e6e6e6] ${className}`}>
      <div className="flex flex-1 pl-[13px]">{children}</div>
      <div className="flex h-4 items-center pr-1.5">
        <h2 className="flex-1 text-center text-[#1b7391]">{title}</h2>
        <button type="button" aria-label={`${title}选项`}><Caret /></button>
      </div>
    </section>
  );
}

function Ribbon() {
  return (
    <div className="flex h-[108px] shrink-0 border-b border-[#d5d5d5] pt-[5px]">
      <Group title="曲线" className="w-[665px]">
        <ToolColumn className="w-[75px]" tools={[['line', '直线'], ['arc', '圆弧/圆'], ['basic', '基本曲线']]} />
        <ToolColumn className="w-[65px]" tools={[['chamfer', '倒斜角'], ['rect', '矩形'], ['hex', '多边形']]} />
        <ToolColumn className="w-[74px]" tools={[['helix', '螺旋'], ['ellipse', '椭圆'], ['artspline', '艺术样条']]} />
        <ToolColumn className="w-[75px]" tools={[['spline', '样条'], ['bridge', '桥接'], ['simplify', '简化曲线']]} />
        <ToolColumn className="w-[95px]" tools={[['fillet', '圆形圆角曲线'], ['smoothstring', '光顺曲线串'], ['A', '文本']]} />
        <ToolColumn className="w-[74px]" tools={[['surfcurve', '曲面曲线'], ['faceoffset', '面上偏置'], ['offset', '偏置曲线']]} />
        <ToolColumn className="w-[98px]" tools={[['project', '投影曲线'], ['wrap', '缠绕/展开曲线'], ['intersect', '相交曲线']]} />
        <ToolColumn className="w-[95px]" tools={[['iso', '等参数曲线'], ['extract', '抽取曲线'], ['virtual', '抽取虚拟曲线']]} />
      </Group>
      <Group title="编辑曲线" className="w-[225px]">
        <ToolColumn className="w-[113px]" tools={[['trim', '修剪曲线'], ['corner', '修剪拐角（原有）'], ['smoothspline', '光顺样条']]} />
        <ToolColumn className="w-[90px]" tools={[['divide', '分割曲线'], ['length', '曲线长度'], ['datum', '基准平面(D)...']]} />
      </Group>
      <Group title="同步建模与简单体" className="w-[270px]">
        <ToolColumn className="w-[90px]" tools={[['moveface', '移动面(M)...'], ['replaceface', '替换面(R)...'], ['deleteface', '删除面(A)...']]} />
        <ToolColumn className="w-[88px]" tools={[['optimize', '优化面(O)...'], ['simple', '简化(Y)...'], ['block', '块(K)...']]} />
        <ToolColumn className="w-[72px]" tools={[['cylinder', '圆柱(C)...'], ['cone', '圆锥(O)...'], ['hole', '孔(H)...']]} />
      </Group>
      <Group title="图层与视图" className="w-[241px]">
        <ToolColumn className="w-[84px]" tools={[['layerset', '图层设置'], ['layermove', '移动至图层'], ['layercopy', '复制至图层']]} />
        <div className="flex w-9 flex-col gap-[7px]">
          {['viewwrench', 'viewtoggle', 'viewpmi'].map((n) => (
            <button type="button" key={n} aria-label={n}><Icon name={n} /></button>
          ))}
        </div>
        <button type="button" className="mr-3 flex w-[43px] flex-col items-center gap-[3px]">
          <svg viewBox="0 0 43 43" className="size-[43px]" aria-hidden="true">
            <rect x=".500" y=".500" width="42" height="42" fill="url(#backdrop)" stroke="#8a8a8a" />
            <path d="M1 1H42V5.500H1Z" fill="#fff" />
            <path d="M31 3H33M35 3H37M39 3H41" stroke="#999" />
          </svg>
          背景
          <Caret />
        </button>
        <button type="button" className="flex w-[43px] flex-col items-center gap-[3px]">
          <svg viewBox="0 0 43 43" className="size-[43px]" stroke="#5f6366" strokeLinejoin="round" aria-hidden="true">
            <path d="M1 13V31L10 38Q21 45 32 38L41 31V13Z" fill="url(#metal)" />
            <path d="M21.500 1 41 13 32 18Q21 23 10 18L1 13Z" fill="#e1e3e4" />
            <path d="M10 18V38M32 18V38" fill="none" />
          </svg>
          样式
          <Caret />
        </button>
      </Group>
      <div className="flex flex-1 flex-col items-end justify-end pr-1 pb-1.5"><Caret /></div>
    </div>
  );
}

function Combo({ label, className }: { label: string; className: string }) {
  return (
    <div className={`relative h-5 ${className}`}>
      <select aria-label={label} className="h-5 w-full appearance-none border border-[#8d8d8d] bg-white pl-[3px] text-[10px] text-[#222]">
        <option>{label}</option>
      </select>
      <svg viewBox="0 0 6 4" className="pointer-events-none absolute top-2 right-1 h-1 w-1.5" aria-hidden="true">
        <path d="M0 0H6L3 4Z" fill="#111" />
      </svg>
    </div>
  );
}

function TextMenu({ label }: { label: ReactNode }) {
  return (
    <button type="button" className="flex items-center gap-1 whitespace-nowrap">
      {label}
      <Caret />
    </button>
  );
}

function SelectionBar() {
  const hot = 'flex h-7 w-[30px] items-center justify-center bg-[#cfe4ec]';
  return (
    <div className="flex h-8 shrink-0 items-center border-b border-[#bdbdbd] pl-[13px]">
      <Combo label="无选择过滤器" className="w-[133px]" />
      <button type="button" aria-label="重置过滤器" className="ml-2.5"><Icon name="filterclear" /></button>
      <Combo label="整个装配" className="ml-2.5 w-[139px]" />
      <button type="button" aria-label="选择整体" className={`ml-1.5 ${hot}`}><Icon name="cylpair" /></button>
      <button type="button" aria-label="捕捉链接" className="ml-1.5"><Icon name="snaplink" /></button>
      <button type="button" aria-label="选择体" className="ml-2 flex items-center gap-2"><Icon name="cylhand" /><Caret /></button>
      <button type="button" aria-label="类型过滤" className="ml-3 flex items-center gap-1"><Icon name="filterlist" /><Caret /></button>
      <button type="button" aria-label="捕捉点" className="ml-2.5"><Icon name="snapgray" /></button>
      <button type="button" aria-label="体定位" className="ml-2.5"><Icon name="cubetarget" /></button>
      <button type="button" aria-label="框定位" className="ml-2.5 flex items-center gap-2"><Icon name="recttarget" /><Caret /></button>
      <button type="button" aria-label="边线显示" className="ml-2.5"><Icon name="cubeline" /></button>
      <button type="button" aria-label="边选择" className={`ml-1.5 ${hot}`}><Icon name="cubeedge" /></button>
      <span className="mx-2 h-6 w-px bg-[#e6e6e6]" />
      <div className="flex items-center gap-2.5">
        <TextMenu label="常用工具" />
        <TextMenu label="电极工具" />
        <TextMenu label="电极图纸" />
        <TextMenu label="导入导出" />
        <TextMenu label={<span><u>W</u>CS</span>} />
      </div>
      <button type="button" aria-label="WCS 窗口" className="ml-2.5"><Icon name="wcs" /></button>
      <button type="button" className="ml-2.5 flex items-center gap-[3px] whitespace-nowrap"><Icon name="regen" />重新生成</button>
      <button type="button" className="ml-2 flex items-center gap-[3px] whitespace-nowrap"><Icon name="machining" />进入加工模块</button>
      <span className="ml-2 h-6 w-px bg-[#e6e6e6]" />
      <span className="flex flex-1 justify-end self-end pr-1 pb-1.5"><Caret /></span>
    </div>
  );
}

function SideBar({ groups, className }: { groups: string[][]; className: string }) {
  return (
    <aside className={`flex shrink-0 flex-col items-center bg-white pt-2.5 pb-1 ${className}`}>
      {groups.map((group, i) => (
        <div key={i} className="flex w-full flex-col items-center gap-2">
          {group.map((n) => (
            <button type="button" key={n} aria-label={n}><Icon name={n} /></button>
          ))}
          <span className="mb-3 h-px w-6 bg-[#dedede]" />
        </div>
      ))}
      <svg viewBox="0 0 3 6" className="mt-auto mr-4 h-1.5 w-[3px]" aria-hidden="true"><path d="M3 0V6L0 3Z" fill="#111" /></svg>
    </aside>
  );
}

function Viewport() {
  const curve = 'C472.200 732.600 547.200 768.200 616.800 753.100';
  return (
    <svg viewBox="133 229 932 795" className="block min-h-0 w-full flex-1 bg-[#d5d5d5]" role="img" aria-label="模型视图">
      <defs>
        <linearGradient id="side" x1="408" y1="0" x2="617" y2="0" gradientUnits="userSpaceOnUse">
          <stop offset="0" stopColor="#a56104" />
          <stop offset=".55" stopColor="#a06002" />
          <stop offset="1" stopColor="#965a02" />
        </linearGradient>
        <linearGradient id="bore" x1="508" y1="0" x2="718" y2="0" gradientUnits="userSpaceOnUse">
          <stop offset="0" stopColor="#a06003" />
          <stop offset=".3" stopColor="#935701" />
          <stop offset=".55" stopColor="#975a01" />
          <stop offset=".8" stopColor="#a56003" />
          <stop offset="1" stopColor="#a26003" />
        </linearGradient>
      </defs>
      <g stroke="#6b4c14" strokeWidth="1" strokeLinejoin="round">
        <path d="M372.500 475.700 449.300 673.500 408.600 884.400 330.700 688.800Z" fill="#a66104" />
        <path d={`M449.300 673.500${curve}L577.100 965.500C507.500 980.500 432 944 408.600 884.400Z`} fill="url(#side)" />
        <path d="M616.800 753.100 849.600 702.600 809.300 915.800 577.100 965.500Z" fill="#965a02" />
        <path d={`M372.500 475.700 449.300 673.500${curve}L849.600 702.600 730.700 396.800Z`} fill="#f8c10c" />
        <ellipse cx="613" cy="577.700" rx="105.300" ry="86.500" transform="rotate(12.600 613 577.700)" fill="url(#bore)" />
      </g>
      <g>
        <path d="M611 585 596 553" stroke="#5aa52c" strokeWidth="4" />
        <path d="M602 555 612 551" stroke="#8d6a78" strokeWidth="7" opacity=".6" />
        <path d="M611 586 613 567 616 562 617 569Z" fill="#1c2a8c" stroke="#1c2a8c" />
        <path d="M616 587 655 578" stroke="#d8442a" strokeWidth="3" />
        <path d="M600 541H616M602 546H616" stroke="#6f8a10" strokeWidth="3" opacity=".5" />
      </g>
      <g fill="none" stroke="#b5b5b5">
        <path d="M205 906 242 898 252 926 217 935ZM205 906 202 922 213 957 217 935M213 957 249 947 252 926" />
      </g>
      <path d="M217 903 209 884" stroke="#3c9a3c" strokeWidth="4" />
      <path d="M206 876 215 887 206 891Z" fill="#3c9a3c" />
      <path d="M229 918 231 903" stroke="#0c2a88" strokeWidth="4" />
      <path d="M233 892 237 907 227 905Z" fill="#0c2a88" />
      <path d="M250 922 273 917" stroke="#cf3f45" strokeWidth="4" />
      <path d="M286 914 271 912 273 922Z" fill="#cf3f45" />
      <g className="font-['Open_Sans',sans-serif] text-[11px]">
        <text x="200" y="873" fill="#7fa57f">Y</text>
        <text x="231" y="891" fill="#3d62bd">Z</text>
        <text x="291" y="917" fill="#c46a78">X</text>
      </g>
    </svg>
  );
}

const check = (
  <svg viewBox="0 0 14 12" className="mx-auto h-3 w-3.5" fill="none" stroke="#3cc956" strokeWidth="1.800" aria-hidden="true">
    <path d="M1 7 5 11 13 1" />
  </svg>
);

const treeIcons: Record<string, ReactNode> = {
  clock: <path d="M7 1A6 6 0 1 0 7 13 6 6 0 1 0 7 1M7 3V7H4" fill="none" stroke="#333" />,
  view: (
    <g fill="none" stroke="#333">
      <path d="M.500 1H13.500V13.500H.500ZM.500 3.500H13.500" />
      <path d="M5 6 8 5V9L10 11H4Z" fill="#555" />
    </g>
  ),
  check: <path d="M1 8 5 12 13 2" fill="none" stroke="#3cc956" strokeWidth="1.800" />,
  camera: (
    <g>
      <path d="M1 4 6 1V11L1 13Z" fill="#fff" stroke="#e0784e" />
      <path d="M5 5 9 2 13 5V10L8 12 5 10Z" fill="#a98a52" stroke="#6b6148" />
      <circle cx="9" cy="7" r="1.500" fill="#e8d8a8" />
    </g>
  ),
  folder: <path d="M1 12V2H5L6 4H12V6M1 12 3.500 6H14L12 12Z" fill="none" stroke="#555" />,
  ball: (
    <g>
      <circle cx="7" cy="7" r="6" fill="#38c050" stroke="#1c8a32" />
      <ellipse cx="6" cy="4.500" rx="3" ry="2" fill="#a6ecb2" />
    </g>
  ),
  history: (
    <g>
      <path d="M.500.500H13.500V13.500H.500Z" fill="#fff" stroke="#bbb" />
      <path d="M3 3H8V8H3ZM6 6H11V11H6Z" fill={F} stroke="#8a4a10" />
    </g>
  ),
  eye: (
    <g fill="none" stroke="#444">
      <path d="M1 7Q7 0 13 7 7 14 1 7Z" />
      <circle cx="7" cy="7" r="3" fill="#333" />
    </g>
  ),
  body: (
    <g>
      <path d="M4 8 8 6 14 8V12L10 14 4 12Z" fill="#8fa2f0" stroke="#3048b8" />
      <path d="M7 3 11 2 13 5 9 7Z" fill="#e4e9ff" stroke="#3048b8" />
      <circle cx="4.500" cy="4.500" r="3.800" fill="#f8b8b8" stroke="#c8202c" strokeWidth="1.300" />
      <path d="M2 2 7 7" stroke="#c8202c" strokeWidth="1.300" />
    </g>
  ),
};

interface Row {
  toggle?: string;
  icons: string[];
  label: string;
  child?: boolean;
  ok?: boolean;
}
const rows: Row[] = [
  { icons: ['clock'], label: '历史记录建模模式' },
  { toggle: '+', icons: ['view'], label: '模型视图' },
  { toggle: '+', icons: ['check', 'camera'], label: '摄像机' },
  { icons: ['folder'], label: '非时间戳记几何体' },
  { toggle: '−', icons: ['ball', 'history'], label: '模型历史记录', ok: true },
  { icons: ['eye', 'body'], label: '体 (0)', child: true, ok: true },
];
const blankRows = Array.from({ length: 33 }, (_, i) => i);

function Navigator() {
  const cell = 'border-r border-[#ececec] p-0';
  return (
    <section className="flex min-w-0 flex-1 flex-col bg-white pr-[5px] pb-[3px] pl-2">
      <div className="flex h-[26px] shrink-0 items-center gap-2.5 pl-[3px] text-[11px]">
        <span className="size-[11px] border border-t-2 border-[#333]" />
        <h2>部件导航器</h2>
      </div>
      <div className="min-h-0 flex-1 basis-0 overflow-hidden border-x border-[#ececec]">
        <table className="w-full table-fixed border-collapse text-[11px]">
          <colgroup>
            <col />
            <col className="w-[21px]" />
            <col className="w-[22px]" />
            <col className="w-[88px]" />
            <col className="w-[85px]" />
          </colgroup>
          <thead>
            <tr className="h-[18px] bg-[#efefef] text-left text-[#444]">
              <th className="border-r border-[#dcdcdc] p-0 pl-1.5 font-normal">
                <span className="flex items-center gap-4">
                  名称
                  <svg viewBox="0 0 8 5" className="h-[5px] w-2" aria-hidden="true"><path d="M4 0 8 5H0Z" fill="#111" /></svg>
                </span>
              </th>
              <th className="border-r border-[#dcdcdc] p-0 text-center font-normal">当</th>
              <th className="border-r border-[#dcdcdc] p-0 text-center font-normal">最</th>
              <th className="border-r border-[#dcdcdc] p-0 pl-1 font-normal">附注</th>
              <th className="p-0" aria-label="空列" />
            </tr>
          </thead>
          <tbody>
            {rows.map((r) => (
              <tr key={r.label} className="h-[18px] even:bg-[#f9f9f9]">
                <td className={cell}>
                  <div className={`flex h-[17px] items-center whitespace-nowrap ${r.child ? 'pl-[25px] font-bold' : 'pl-[5px]'}`}>
                    {r.child ? (
                      <span className="mb-2 h-2 w-2.5 border-b border-l border-[#ccc]" />
                    ) : (
                      <span className="w-[13px] text-[10px] text-[#333]">{r.toggle ?? ''}</span>
                    )}
                    {r.icons.map((n) => (
                      <svg key={n} viewBox="0 0 14 14" className="size-3.5 shrink-0" aria-hidden="true">{treeIcons[n]}</svg>
                    ))}
                    <span className="ml-[3px]">{r.label}</span>
                  </div>
                </td>
                <td className={cell}>
                  {r.child && (
                    <svg viewBox="0 0 8 12" className="mx-auto h-3 w-2" fill="none" stroke="#444" aria-hidden="true">
                      <path d="M1 0V12M3 1H7V3H3ZM3 9H7V11H3Z" />
                      <path d="M3 5H7V7H3Z" stroke={O} />
                    </svg>
                  )}
                </td>
                <td className={cell}>{r.ok && check}</td>
                <td className={cell} />
                <td className="p-0" />
              </tr>
            ))}
            {blankRows.map((i) => (
              <tr key={i} className="h-[18px] even:bg-[#f9f9f9]">
                <td className={cell} />
                <td className={cell} />
                <td className={cell} />
                <td className={cell} />
                <td className="p-0" />
              </tr>
            ))}
          </tbody>
        </table>
      </div>
      <div className="h-[5px] shrink-0 border-y-2 border-[#bcbcbc] bg-[#dedede]" />
      {['搜索', '相关性', '细节', '预览'].map((s) => (
        <button type="button" key={s} className="flex h-[21px] shrink-0 items-center gap-2 border-b-2 border-[#d6d6d6] pl-2.5 text-[12px] text-[#1d6f87]">
          <svg viewBox="0 0 4 8" className="h-2 w-1" aria-hidden="true"><path d="M0 0 4 4 0 8Z" fill="#1d5a6c" /></svg>
          {s}
        </button>
      ))}
    </section>
  );
}

function ResourceBar() {
  const item = 'flex w-full items-center justify-center';
  return (
    <nav className="flex w-7 shrink-0 flex-col border-l-2 border-[#c2c2c2] bg-[#dcdcdc] pr-0.5">
      <button type="button" aria-label="设置" className={`${item} h-6`}><Icon name="gear" /></button>
      <button type="button" aria-label="装配导航器" className={`${item} mt-[13px] h-9`}><Icon name="assembly" /></button>
      <button type="button" aria-label="部件导航器" className={`${item} h-10 bg-white`}><Icon name="part" /></button>
      <button type="button" aria-label="约束导航器" className={`${item} h-9`}><Icon name="partorange" /></button>
      <button type="button" aria-label="重用库" className={`${item} h-11`}><Icon name="partsearch" /></button>
      <button type="button" aria-label="Web 浏览器" className={`${item} h-[46px]`}><Icon name="web" /></button>
      <button type="button" aria-label="历史记录" className={`${item} h-12`}><Icon name="clock" /></button>
      <button type="button" aria-label="工具" className={`${item} h-7`}><Icon name="tools" /></button>
    </nav>
  );
}

export default function App() {
  return (
    <div className="flex h-screen justify-center bg-black pr-[95px] pl-24 font-['Open_Sans','Noto_Sans_CJK_SC',sans-serif] text-[10px] leading-[14px] text-[#333]">
      <svg className="absolute size-0" aria-hidden="true">
        <defs>
          <linearGradient id="metal" x1="0" x2="1" y1="0" y2="0">
            <stop offset="0" stopColor="#c9cccd" />
            <stop offset=".35" stopColor="#eceded" />
            <stop offset="1" stopColor="#a9adb0" />
          </linearGradient>
          <linearGradient id="backdrop" x1="0" x2="0" y1="0" y2="1">
            <stop offset="0" stopColor="#111" />
            <stop offset="1" stopColor="#858585" />
          </linearGradient>
        </defs>
      </svg>
      <div className="flex min-w-0 flex-1 flex-col overflow-hidden border-b-[3px] border-l-[3px] border-[#1a5f78] bg-white">
        <Header />
        <Ribbon />
        <SelectionBar />
        <main className="flex min-h-0 flex-1">
          <SideBar
            className="w-[34px]"
            groups={[['lbracket', 'section', 'sketchpages', 'linkpart', 'bluemove', 'wirecube', 'extrude', 'shell', 'tilt', 'cubepages', 'draft', 'bend', 'round', 'faceblend']]}
          />
          <div className="flex min-w-0 flex-1 flex-col">
            <div className="flex h-6 shrink-0 items-stretch border-b-2 border-[#2a5f78] text-[11px]">
              <button type="button" className="flex w-[86px] items-center gap-1 pl-[5px] whitespace-nowrap">
                <svg viewBox="0 0 14 14" className="size-3.5" fill="none" stroke="#444" aria-hidden="true">
                  <path d="M1 2H5V5M6 1V4M8 3 10 1V12L8 11M10 1H13.500V12H10M1 13 7 6" />
                  <circle cx="4.500" cy="9" r="3.500" />
                </svg>
                发现中心
              </button>
              <div className="flex w-[117px] items-center bg-[#0b6289] pl-[5px] text-white">
                <Icon name="part" className="size-[13px]" />
                <span className="ml-[5px] flex-1">_model1.prt</span>
                <svg viewBox="0 0 9 10" className="mr-1.5 h-2.5 w-[9px]" fill="none" stroke="#fff" strokeWidth="1.500" aria-hidden="true">
                  <path d="M4 9H1V1H6L8 3V5M4 8 8 6V9H6" />
                </svg>
                <button type="button" aria-label="关闭标签" className="mr-1.5">
                  <svg viewBox="0 0 8 8" className="size-2" stroke="#fff" strokeWidth="2" aria-hidden="true"><path d="M1 1 7 7M7 1 1 7" /></svg>
                </button>
              </div>
            </div>
            <Viewport />
          </div>
          <SideBar
            className="w-9 border-r-2 border-[#d0d0d0]"
            groups={[
              ['sheet1', 'sheet2', 'sheet3', 'sheet4', 'saddle', 'tube', 'ribbonbody', 'orangeframe', 'cornersheet', 'boxsheet', 'vshape', 'orangecurve', 'stack'],
              ['graycube', 'purple', 'hexshell', 'fan', 'pedestal', 'eyeoff', 'cubepages', 'eyeswap', 'deleteface', 'orangemove'],
            ]}
          />
          <div className="flex w-[436px] shrink-0">
            <Navigator />
            <ResourceBar />
          </div>
        </main>
        <div className="flex h-[33px] shrink-0 items-center border-b border-[#bdbdbd] pl-[9px]">
          <div className="flex items-center gap-2.5">
            {['purple', 'pedestal', 'stripes', 'fan', 'redcube', 'pinkplane', 'rectsel'].map((n) => (
              <button type="button" key={n} aria-label={n}><Icon name={n} /></button>
            ))}
            <Caret />
            <button type="button" aria-label="多边形选择"><Icon name="hexsel" /></button>
            <Caret />
          </div>
          <span className="ml-2 h-6 w-px bg-[#e2e2e2]" />
          <span className="flex flex-1 justify-end self-end pr-1 pb-2"><Caret /></span>
        </div>
        <footer className="flex h-5 shrink-0 items-center pl-1 font-medium text-[#222]">选择对象并使用 MB3，或者双击某一对象</footer>
      </div>
    </div>
  );
}
